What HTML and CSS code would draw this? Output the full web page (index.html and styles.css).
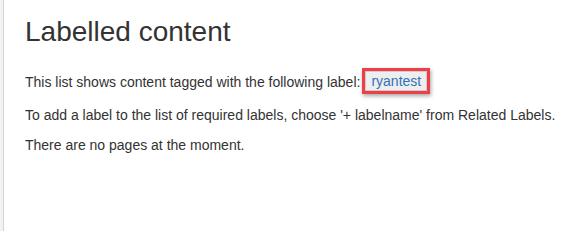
FILE: index.html
```html
<!DOCTYPE html>
<html lang="en">
<head>
    <meta charset="UTF-8">
    <title>Labelled content</title>
    <link rel="stylesheet" href="styles.css">
</head>
<body>
    <div class="page">
        <div class="sidebar"></div>
        <div class="main">
            <h1>Labelled content</h1>
            <p class="first">This list shows content tagged with the following label:<span class="highlight"><a class="label" href="#">ryantest</a></span></p>
            <p>To add a label to the list of required labels, choose '+ labelname' from Related Labels.</p>
            <p>There are no pages at the moment.</p>
        </div>
    </div>
</body>
</html>
```

FILE: styles.css
```css
body {
    margin: 0;
    font-family: "Liberation Sans", Arial, sans-serif;
    color: #333;
    background-color: #fff;
}
.page {
    display: flex;
    min-height: 231px;
}
.sidebar {
    width: 3px;
    background-color: #f2f2f2;
    border-right: 1px solid #d5d5d5;
}
.main {
    padding: 14px 0 0 21px;
    font-size: 14px;
}
h1 {
    font-size: 28px;
    font-weight: normal;
    margin: 0 0 18px 0;
    line-height: 36px;
}
p {
    margin: 0 0 11px 0;
    line-height: 19px;
}
p.first {
    margin-bottom: 11px;
    line-height: 26px;
}
.highlight {
    display: inline-block;
    vertical-align: 1px;
    margin-left: 2px;
    border: 3px solid #ee3f45;
    box-shadow: 1px 2px 4px rgba(0,0,0,0.35);
    line-height: 18px;
}
.label {
    display: block;
    padding: 0 5px;
    background-color: #eceef1;
    border: 1px solid #c9ccd1;
    color: #3572b0;
    text-decoration: none;
}
```
